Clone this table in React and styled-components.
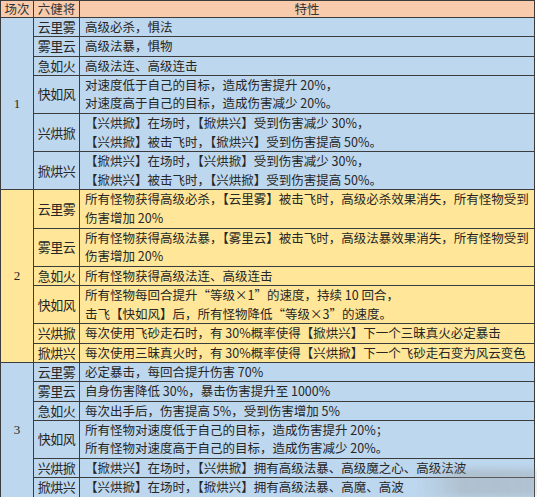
import React from "react";
import styled, { createGlobalStyle } from "styled-components";

const GlobalStyle = createGlobalStyle`
  html, body { margin: 0; padding: 0; background: #ffffff; }
  body { font-family: "Noto Sans CJK SC", "Noto Sans", sans-serif; }
`;

const sections = [
  {
    no: "1",
    tone: "blue",
    rows: [
      ["云里雾", ["高级必杀，惧法"]],
      ["雾里云", ["高级法暴，惧物"]],
      ["急如火", ["高级法连、高级连击"]],
      ["快如风", ["对速度低于自己的目标，造成伤害提升 20%，", "对速度高于自己的目标，造成伤害减少 20%。"]],
      ["兴烘掀", ["【兴烘掀】在场时，【掀烘兴】受到伤害减少 30%，", "【兴烘掀】被击飞时，【掀烘兴】受到伤害提高 50%。"]],
      ["掀烘兴", ["【掀烘兴】在场时，【兴烘掀】受到伤害减少 30%，", "【掀烘兴】被击飞时，【兴烘掀】受到伤害提高 50%。"]],
    ],
  },
  {
    no: "2",
    tone: "yellow",
    rows: [
      ["云里雾", ["所有怪物获得高级必杀，【云里雾】被击飞时，高级必杀效果消失，所有怪物受到", "伤害增加 20%"]],
      ["雾里云", ["所有怪物获得高级法暴，【雾里云】被击飞时，高级法暴效果消失，所有怪物受到", "伤害增加 20%"]],
      ["急如火", ["所有怪物获得高级法连、高级连击"]],
      ["快如风", ["所有怪物每回合提升“等级×1”的速度，持续 10 回合，", "击飞【快如风】后，所有怪物降低“等级×3”的速度。"]],
      ["兴烘掀", ["每次使用飞砂走石时，有 30%概率使得【掀烘兴】下一个三昧真火必定暴击"]],
      ["掀烘兴", ["每次使用三昧真火时，有 30%概率使得【兴烘掀】下一个飞砂走石变为风云变色"]],
    ],
  },
  {
    no: "3",
    tone: "blue",
    rows: [
      ["云里雾", ["必定暴击，每回合提升伤害 70%"]],
      ["雾里云", ["自身伤害降低 30%，暴击伤害提升至 1000%"]],
      ["急如火", ["每次出手后，伤害提高 5%，受到伤害增加 5%"]],
      ["快如风", ["所有怪物对速度低于自己的目标，造成伤害提升 20%；", "所有怪物对速度高于自己的目标，造成伤害减少 20%。"]],
      ["兴烘掀", ["【掀烘兴】在场时，【兴烘掀】拥有高级法暴、高级魔之心、高级法波"]],
      ["掀烘兴", ["【兴烘掀】在场时，【掀烘兴】拥有高级法暴、高魔、高波"]],
    ],
  },
];

const tones = {
  blue: "#bdd7ee",
  yellow: "#ffe699",
};

export default function App() {
  return (
    <>
      <GlobalStyle />
      <Frame>
        <Table>
          <colgroup>
            <col style={{ width: 33 }} />
            <col style={{ width: 46 }} />
            <col />
          </colgroup>
          <thead>
            <tr>
              <HeadCell>场次</HeadCell>
              <HeadCell>六健将</HeadCell>
              <HeadCell>特性</HeadCell>
            </tr>
          </thead>
          <tbody>
            {sections.map((section) =>
              section.rows.map(([name, lines], i) => (
                <tr key={section.no + name}>
                  {i === 0 && (
                    <RoundCell $tone={section.tone} rowSpan={section.rows.length}>
                      {section.no}
                    </RoundCell>
                  )}
                  <NameCell $tone={section.tone}>{name}</NameCell>
                  <TraitCell $tone={section.tone}>
                    {lines.map((line) => (
                      <Line key={line} $double={lines.length > 1}>
                        {line}
                      </Line>
                    ))}
                  </TraitCell>
                </tr>
              ))
            )}
          </tbody>
        </Table>
        <Watermark />
      </Frame>
    </>
  );
}

const Frame = styled.div`
  position: relative;
  width: 537px;
  height: 497px;
  overflow: hidden;
`;

const Table = styled.table`
  width: 535px;
  border-collapse: collapse;
  table-layout: fixed;
  font-size: 12.5px;
  color: #262626;
`;

const Cell = styled.td`
  border: 1px solid #3c3c3c;
  padding: 0;
  background: ${(p) => tones[p.$tone]};
  line-height: 18px;
  white-space: nowrap;
  overflow: hidden;
`;

const HeadCell = styled.th`
  border: 1px solid #3c3c3c;
  background: #f8cbad;
  padding: 0;
  height: 16px;
  line-height: 16px;
  font-weight: 400;
  text-align: center;
  white-space: nowrap;
  color: #333;
`;

const RoundCell = styled(Cell)`
  text-align: center;
  vertical-align: middle;
  font-family: "Liberation Serif", "Noto Sans CJK SC", serif;
  font-size: 13px;
`;

const NameCell = styled(Cell)`
  text-align: center;
  vertical-align: middle;
  font-size: 13px;
  letter-spacing: -0.5px;
`;

const TraitCell = styled(Cell)`
  text-align: left;
  padding-left: 5px;
`;

const Line = styled.div`
  height: ${(p) => (p.$double ? "18.6px" : "18.3px")};
  line-height: ${(p) => (p.$double ? "18.6px" : "18.3px")};
`;

const Watermark = styled.div`
  position: absolute;
  right: 0;
  bottom: 0;
  width: 120px;
  height: 28px;
  background: linear-gradient(90deg, rgba(150, 150, 150, 0) 0%, rgba(150, 150, 150, 0.35) 40%, rgba(150, 150, 150, 0.3) 100%);
  filter: blur(3px);
  pointer-events: none;
`;
